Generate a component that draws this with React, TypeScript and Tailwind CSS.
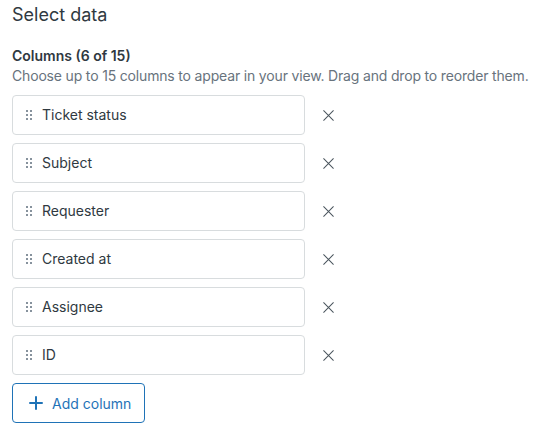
const columns = ["Ticket status", "Subject", "Requester", "Created at", "Assignee", "ID"];

function Grip() {
  return (
    <svg width="6" height="10" viewBox="0 0 6 10" className="shrink-0" fill="#87929d">
      <rect x="0" y="0" width="2" height="2" />
      <rect x="4" y="0" width="2" height="2" />
      <rect x="0" y="4" width="2" height="2" />
      <rect x="4" y="4" width="2" height="2" />
      <rect x="0" y="8" width="2" height="2" />
      <rect x="4" y="8" width="2" height="2" />
    </svg>
  );
}

function Close() {
  return (
    <svg width="11" height="11" viewBox="0 0 12 12" fill="none" stroke="#49545c" strokeWidth="1.1" strokeLinecap="round">
      <path d="M0.75 0.75l10.5 10.5M11.25 0.75L0.75 11.25" />
    </svg>
  );
}

function Plus() {
  return (
    <svg width="14" height="14" viewBox="0 0 14 14" fill="none" stroke="#1f73b7" strokeWidth="2" strokeLinecap="round">
      <path d="M7 1v12M1 7h12" />
    </svg>
  );
}

export default function App() {
  return (
    <div
      className="w-[535px] h-[433px] bg-white px-3 text-[#2f3941]"
      style={{ fontFamily: "Inter, 'Noto Sans', sans-serif" }}
    >
      <h1 className="pt-[3px] text-[18px] leading-6 font-normal">Select data</h1>

      <div className="mt-[19px]">
        <div className="text-[14px] leading-5 font-semibold">Columns (6 of 15)</div>
        <div className="text-[14px] leading-5 text-[#68737d] tracking-[-0.17px] whitespace-nowrap">
          Choose up to 15 columns to appear in your view. Drag and drop to reorder them.
        </div>
      </div>

      <div className="mt-[9px] flex flex-col gap-2">
        {columns.map((c) => (
          <div key={c} className="flex items-center">
            <div className="w-[293px] h-10 border border-[#d8dcde] rounded flex items-center pl-[13px] gap-[10px]">
              <Grip />
              <span className="text-[14px] leading-5">{c}</span>
            </div>
            <div className="ml-[11px] w-6 h-6 flex items-center justify-center">
              <Close />
            </div>
          </div>
        ))}
        <button className="w-[133px] h-10 border border-[#1f73b7] rounded flex items-center pl-[16px] gap-[9px] text-[#1f73b7] text-[14px] bg-white">
          <Plus />
          <span>Add column</span>
        </button>
      </div>
    </div>
  );
}
